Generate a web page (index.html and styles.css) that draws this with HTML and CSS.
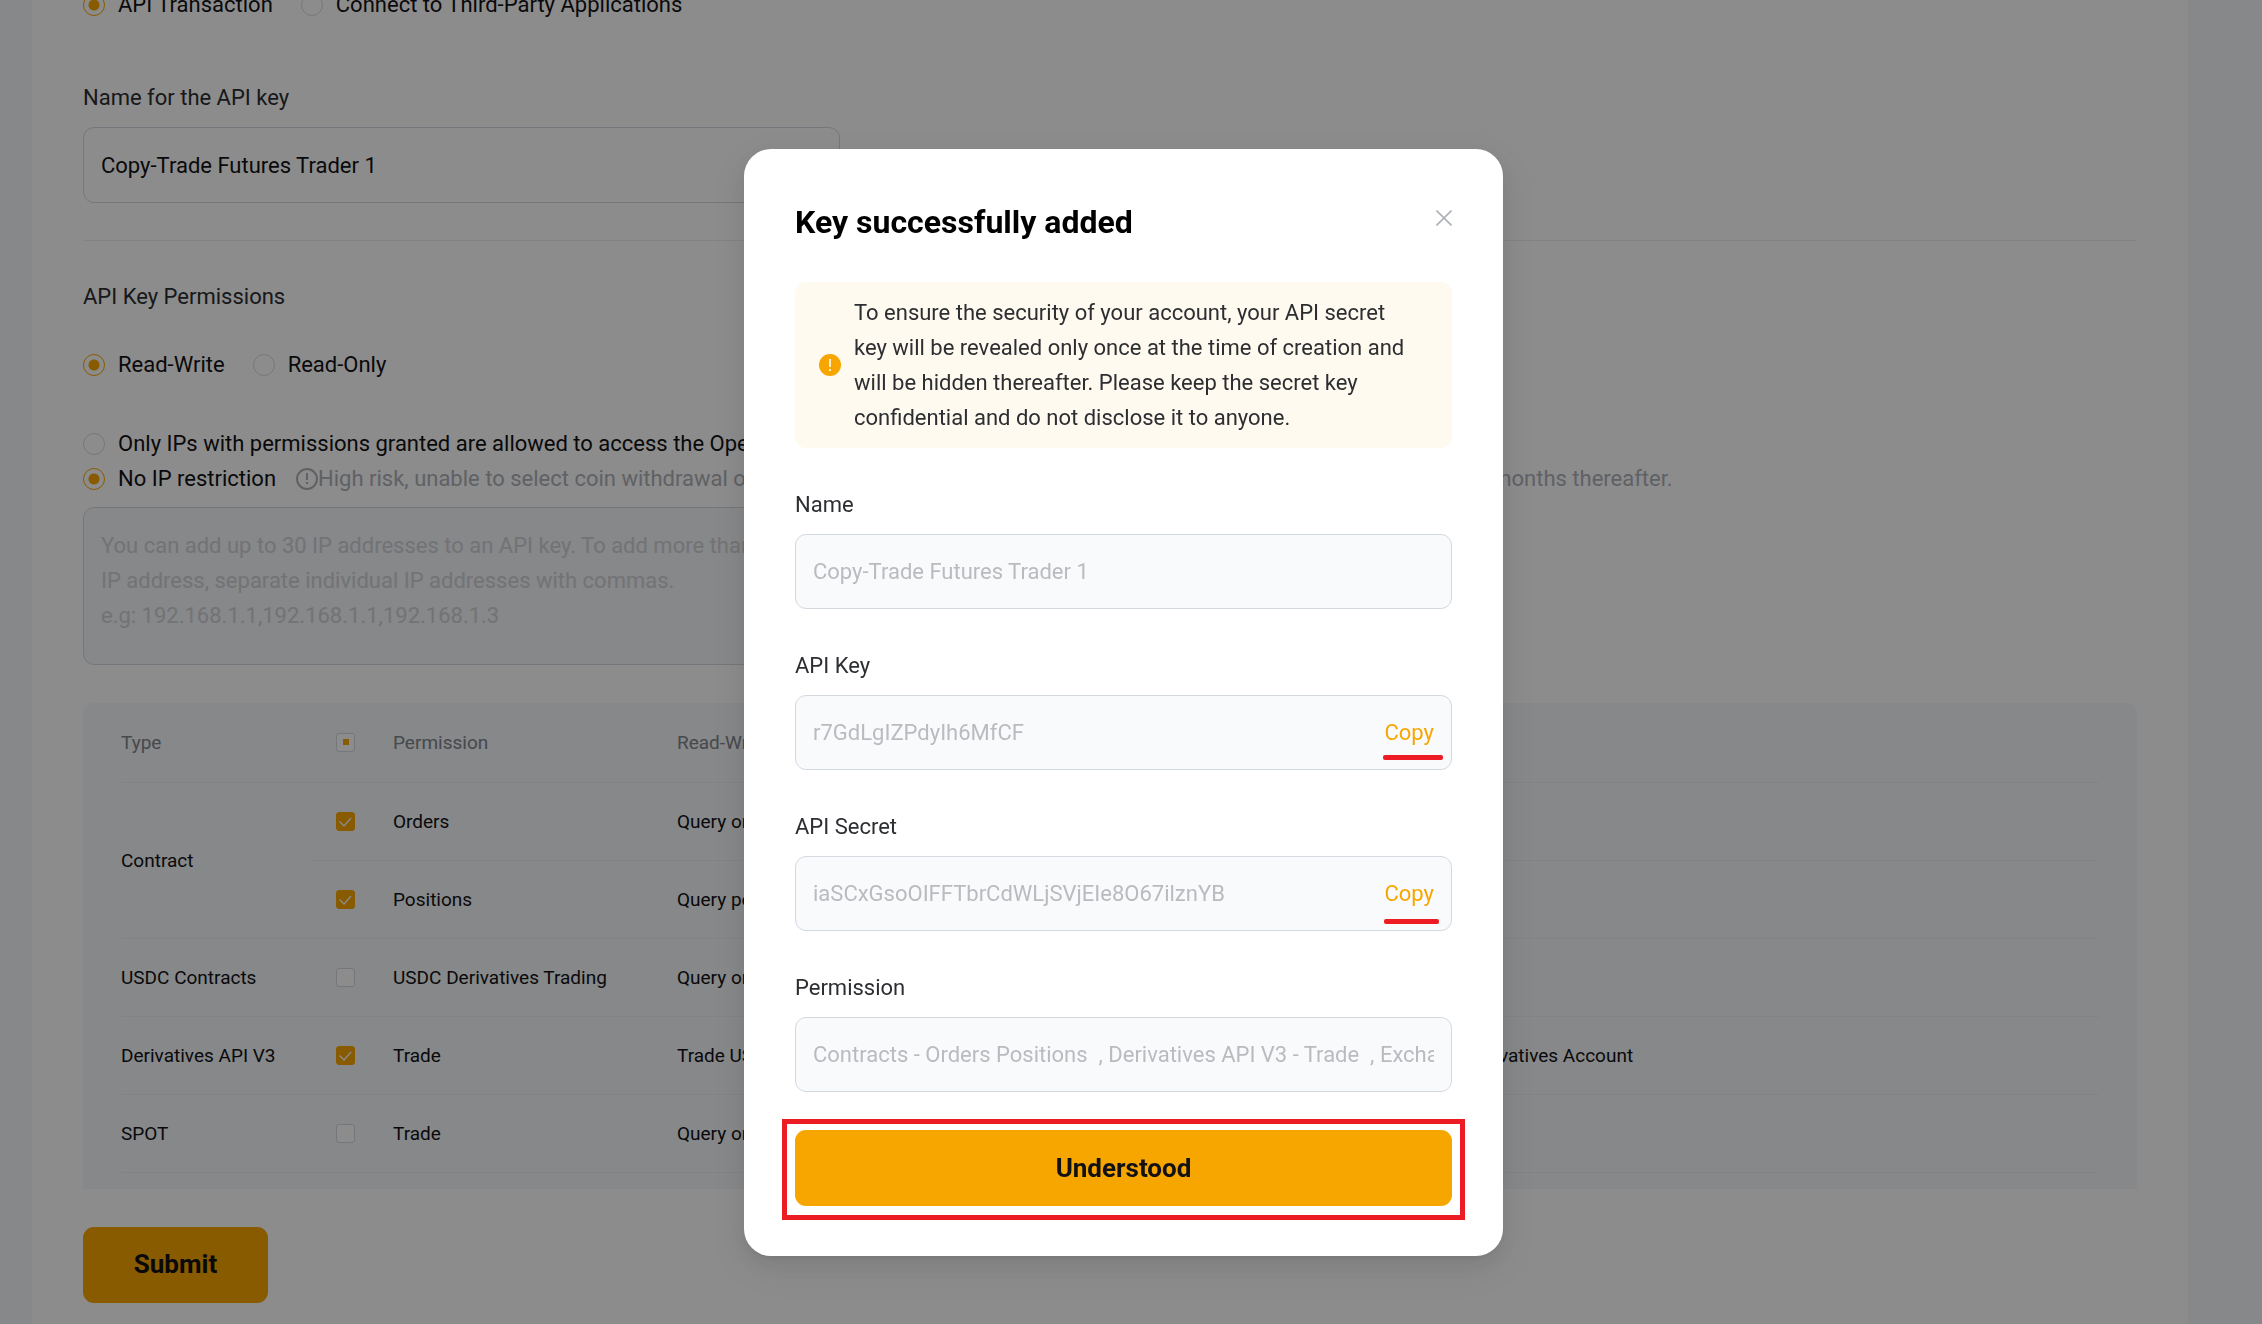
FILE: index.html
```
<!DOCTYPE html>
<html lang="en">
<head>
  <meta charset="utf-8">
  <title>Create New Key</title>
  <link rel="stylesheet" href="styles.css">
</head>
<body>
  <main class="page">
    <form class="key-form">
      <div class="radio-row usage-row">
        <label class="radio"><input type="radio" name="usage" checked>API Transaction</label>
        <label class="radio"><input type="radio" name="usage">Connect to Third-Party Applications</label>
      </div>

      <label class="form-label" for="key-name">Name for the API key</label>
      <input class="text-input" id="key-name" type="text" value="Copy-Trade Futures Trader 1">

      <hr class="divider">

      <p class="form-label">API Key Permissions</p>
      <div class="radio-row access-row">
        <label class="radio"><input type="radio" name="access" checked>Read-Write</label>
        <label class="radio"><input type="radio" name="access">Read-Only</label>
      </div>

      <div class="ip-options">
        <label class="radio"><input type="radio" name="ip">Only IPs with permissions granted are allowed to access the OpenAPI</label>
        <div class="ip-line">
          <label class="radio"><input type="radio" name="ip" checked>No IP restriction</label>
          <span class="ip-warning">
            <svg class="icon" viewBox="0 0 22 22" fill="none" stroke="currentColor" stroke-width="2">
              <circle cx="11" cy="11" r="10"/>
              <path d="M11 5v7M11 14v2"/>
            </svg>High risk, unable to select coin withdrawal or transfer permissions. The API Key will only be valid for a limited period of 3 months thereafter.
          </span>
        </div>
      </div>
      <textarea class="ip-list" aria-label="IP addresses" disabled placeholder="You can add up to 30 IP addresses to an API key. To add more than one
IP address, separate individual IP addresses with commas.
e.g: 192.168.1.1,192.168.1.1,192.168.1.3"></textarea>

      <div class="table-panel">
        <table class="permissions">
          <thead>
            <tr>
              <th class="col-type">Type</th>
              <th class="col-check"><input type="checkbox" class="partial" aria-label="Select all"></th>
              <th class="col-name">Permission</th>
              <th>Read-Write</th>
            </tr>
          </thead>
          <tbody>
            <tr>
              <td rowspan="2">Contract</td>
              <td><input type="checkbox" id="orders" checked></td>
              <td><label for="orders">Orders</label></td>
              <td>Query order and place order</td>
            </tr>
            <tr>
              <td><input type="checkbox" id="positions" checked></td>
              <td><label for="positions">Positions</label></td>
              <td>Query positions and adjust</td>
            </tr>
            <tr>
              <td>USDC Contracts</td>
              <td><input type="checkbox" id="usdc"></td>
              <td><label for="usdc">USDC Derivatives Trading</label></td>
              <td>Query order and position</td>
            </tr>
            <tr>
              <td>Derivatives API V3</td>
              <td><input type="checkbox" id="derivatives" checked></td>
              <td><label for="derivatives">Trade</label></td>
              <td>Trade USDT Perpetual, USDC Perpetual, USDC Options and Inverse Contracts from the Unified Derivatives Account</td>
            </tr>
            <tr>
              <td>SPOT</td>
              <td><input type="checkbox" id="spot"></td>
              <td><label for="spot">Trade</label></td>
              <td>Query order and place order</td>
            </tr>
          </tbody>
        </table>
      </div>

      <button class="btn submit" type="button">Submit</button>
    </form>
  </main>

  <div class="overlay">
    <section class="modal" role="dialog" aria-labelledby="modal-title">
      <header class="modal-header">
        <h2 id="modal-title">Key successfully added</h2>
        <button class="close" type="button" aria-label="Close">
          <svg viewBox="0 0 16 16" fill="none" stroke="currentColor" stroke-width="1.6">
            <path d="M0.5 0.5l15 15M15.5 0.5l-15 15"/>
          </svg>
        </button>
      </header>

      <div class="alert">
        <svg class="icon" viewBox="0 0 22 22">
          <circle cx="11" cy="11" r="11" fill="#f7a600"/>
          <path d="M11 5v8M11 15v2" stroke="#fff" stroke-width="1.6"/>
        </svg>
        <p>To ensure the security of your account, your API secret key will be revealed only once at the time of creation and will be hidden thereafter. Please keep the secret key confidential and do not disclose it to anyone.</p>
      </div>

      <div class="field">
        <label for="name">Name</label>
        <div class="field-box"><input id="name" type="text" value="Copy-Trade Futures Trader 1" disabled></div>
      </div>
      <div class="field">
        <label for="api-key">API Key</label>
        <div class="field-box">
          <input id="api-key" type="text" value="r7GdLgIZPdyIh6MfCF" disabled>
          <button class="copy" type="button">Copy</button>
        </div>
      </div>
      <div class="field">
        <label for="api-secret">API Secret</label>
        <div class="field-box">
          <input id="api-secret" type="text" value="iaSCxGsoOIFFTbrCdWLjSVjEIe8O67ilznYB" disabled>
          <button class="copy copy-secret" type="button">Copy</button>
        </div>
      </div>
      <div class="field">
        <label for="permission">Permission</label>
        <div class="field-box"><input id="permission" type="text" value="Contracts - Orders Positions  , Derivatives API V3 - Trade  , Exchange History" disabled></div>
      </div>

      <div class="highlight">
        <button class="btn" type="button">Understood</button>
      </div>
    </section>
  </div>
</body>
</html>
```
FILE: styles.css
```
* {
  box-sizing: border-box;
}
body {
  margin: 0;
  height: 100vh;
  overflow: hidden;
  background-color: #f5f7fa;
  color: #121214;
  font-family: Roboto, "Liberation Sans", sans-serif;
  font-size: 22px;
  line-height: 35px;
}
p {
  margin: 0;
}
input, textarea, button {
  font: inherit;
  color: inherit;
}
.icon {
  width: 22px;
  height: 22px;
  flex: none;
}

/* form behind the dialog */
.page {
  min-height: 100vh;
  margin: 0 74px 0 32px;
  padding: 0 51px;
  background-color: #fff;
}
.key-form {
  display: flex;
  flex-direction: column;
  align-items: flex-start;
}
.radio-row {
  display: flex;
  gap: 28px;
}
.usage-row {
  margin-top: -13px;
  margin-bottom: 58px;
}
.access-row {
  margin-top: 33px;
  margin-bottom: 44px;
}
.radio {
  display: flex;
  align-items: center;
  gap: 13px;
  white-space: nowrap;
}
.radio input {
  appearance: none;
  width: 22px;
  height: 22px;
  margin: 0;
  border: 1px solid #d4d9e0;
  border-radius: 50%;
}
.radio input:checked {
  border-color: #f7a600;
  background: radial-gradient(circle, #f7a600 5px, transparent 6px);
}
.form-label {
  color: #2c2e32;
}
.text-input {
  width: 757px;
  max-width: 100%;
  height: 76px;
  margin-top: 12px;
  padding: 0 17px;
  border: 1px solid #d4d9e0;
  border-radius: 11px;
  background-color: #fff;
}
.divider {
  width: 100%;
  margin: 37px 0 38px;
  border: 0;
  border-top: 1px solid #eceff3;
}
.ip-line {
  display: flex;
  gap: 20px;
}
.ip-warning {
  display: flex;
  align-items: center;
  color: #adb1b8;
  white-space: nowrap;
}
.ip-list {
  width: 757px;
  max-width: 100%;
  height: 158px;
  margin-top: 11px;
  padding: 20px 17px;
  border: 1px solid #d4d9e0;
  border-radius: 11px;
  background-color: #f5f7fa;
  resize: none;
  overflow: hidden;
}
.ip-list::placeholder {
  color: #d0d2d6;
}

.table-panel {
  width: 100%;
  margin-top: 38px;
  padding: 0 38px 16px;
  border-radius: 11px 11px 0 0;
  background-color: #f5f7fa;
}
.permissions {
  width: 100%;
  border-collapse: collapse;
  table-layout: fixed;
  font-size: 19px;
}
.permissions tr {
  height: 78px;
}
.permissions thead tr {
  height: 79px;
}
.permissions th,
.permissions td {
  padding: 0 0 0 27px;
  border-bottom: 1px solid #eceff3;
  text-align: left;
  font-weight: 400;
}
.permissions th {
  color: #81858c;
}
.permissions tr > :first-child:not(:has(input)) {
  padding-left: 0;
}
.col-type {
  width: 188px;
}
.col-check {
  width: 57px;
}
.col-name {
  width: 284px;
}
.permissions input {
  appearance: none;
  display: block;
  width: 19px;
  height: 19px;
  margin: 0;
  border: 1px solid #d4d9e0;
  border-radius: 3px;
  background-color: #fff;
}
.permissions input:checked {
  border-color: #f7a600;
  background: #f7a600 url("data:image/svg+xml,%3Csvg xmlns='http://www.w3.org/2000/svg' viewBox='0 0 17 17' fill='none' stroke='white' stroke-width='1.2'%3E%3Cpath d='M2.5 8.500l4.500 4.500 7-8'/%3E%3C/svg%3E");
}
.permissions .partial {
  background: #fff linear-gradient(#f7a600, #f7a600) center / 6px 6px no-repeat;
}

.btn {
  height: 76px;
  border: 0;
  border-radius: 11px;
  background-color: #f7a600;
  color: #121214;
  font-size: 26px;
  font-weight: 700;
  cursor: pointer;
}
.submit {
  min-width: 185px;
  margin-top: 38px;
}

/* dialog */
.overlay {
  position: fixed;
  inset: 0;
  display: flex;
  justify-content: center;
  align-items: flex-start;
  padding: 149px 15px 0 0;
  background-color: rgba(0, 0, 0, 0.45);
}
.modal {
  width: 759px;
  padding: 51px;
  border-radius: 27px;
  background-color: #fff;
  box-shadow: 0 4px 8px -5px rgba(0, 0, 0, 0.12),
    0 8px 22px rgba(0, 0, 0, 0.08),
    0 12px 38px 11px rgba(0, 0, 0, 0.05);
}
.modal-header {
  display: flex;
  justify-content: space-between;
  align-items: flex-start;
  margin-bottom: 38px;
}
.modal-header h2 {
  margin: 0;
  color: #000;
  font-size: 32px;
  font-weight: 700;
  line-height: 44px;
}
.close {
  display: flex;
  padding: 10px 0;
  border: 0;
  background: none;
  color: #adb1b8;
  cursor: pointer;
}
.close svg {
  width: 16px;
  height: 16px;
}
.alert {
  display: flex;
  align-items: center;
  gap: 13px;
  padding: 13px 36px 13px 24px;
  border-radius: 11px;
  background-color: #fffaef;
  color: #2c2e32;
}
.field {
  margin-top: 39px;
  color: #2c2e32;
}
.field label {
  display: block;
}
.field-box {
  display: flex;
  align-items: center;
  height: 75px;
  margin-top: 12px;
  padding: 0 17px;
  border: 1px solid #d4d9e0;
  border-radius: 11px;
  background-color: #f9fafc;
}
.field-box input {
  flex: 1;
  min-width: 0;
  padding: 0;
  border: 0;
  background: none;
  color: #b9bbbf;
}
.copy {
  position: relative;
  padding: 0;
  border: 0;
  background: none;
  color: #f7a600;
  cursor: pointer;
}
/* red markings that point out the buttons */
.copy::after {
  content: "";
  position: absolute;
  top: 40px;
  left: -1px;
  width: 60px;
  height: 5px;
  border-radius: 2px;
  background-color: #ed1c24;
}
.copy-secret::after {
  top: 43px;
  left: 0;
  width: 55px;
}
.highlight {
  margin: 27px -13px -15px;
  padding: 6px 8px 9px;
  border: 5px solid #ed1c24;
}
.highlight .btn {
  display: block;
  width: 100%;
}
```
